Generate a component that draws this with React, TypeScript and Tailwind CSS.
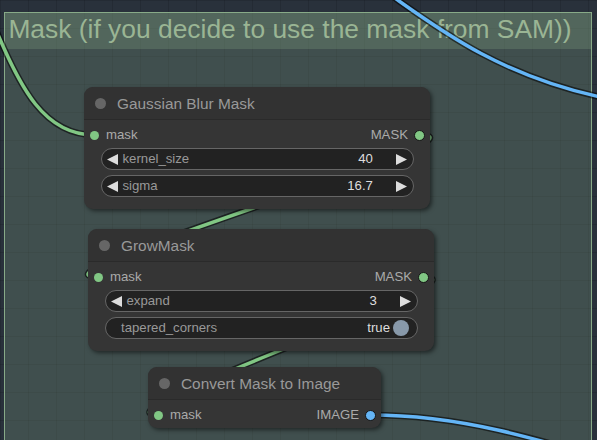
import React from "react";

function Tri({ dir }: { dir: "l" | "r" }) {
  return (
    <svg width="11" height="11" viewBox="0 0 11 11" className="shrink-0">
      {dir === "l" ? (
        <path d="M11 0 L0 5.5 L11 11 Z" fill="#dddddd" />
      ) : (
        <path d="M0 0 L11 5.5 L0 11 Z" fill="#dddddd" />
      )}
    </svg>
  );
}

function NumWidget({ label, value }: { label: string; value: string }) {
  return (
    <div className="h-[22px] rounded-full border border-[#666666] bg-[#222222] flex items-center pl-[5.6px] pr-[5.6px]">
      <Tri dir="l" />
      <span className="ml-[4.4px] text-[13.2px] text-[#999999]">{label}</span>
      <span className="ml-auto mr-[23px] text-[13.2px] text-[#dddddd]">{value}</span>
      <Tri dir="r" />
    </div>
  );
}

function ToggleWidget({ label, value }: { label: string; value: string }) {
  return (
    <div className="h-[22px] rounded-full border border-[#666666] bg-[#222222] flex items-center pl-[15.5px] pr-[7.5px]">
      <span className="text-[13.2px] text-[#999999]">{label}</span>
      <span className="ml-auto mr-[3px] text-[13.2px] text-[#dddddd]">{value}</span>
      <span className="w-[16px] h-[16px] rounded-full bg-[#8899aa] shrink-0" />
    </div>
  );
}

function SlotRow({ input, output, outColor }: { input: string; output: string; outColor: "green" | "blue" }) {
  return (
    <div className="h-[28px] pt-[2px] flex items-center pl-[6px] pr-[5px]">
      <span className="w-[9px] h-[9px] rounded-full bg-[#81c784] shrink-0" />
      <span className="ml-[7px] text-[13.2px] text-[#aaaaaa]">{input}</span>
      <span className="ml-auto mr-[6px] text-[13.2px] text-[#aaaaaa]">{output}</span>
      <span
        className={
          outColor === "green"
            ? "w-[11px] h-[11px] rounded-full bg-[#81c784] border-[1.5px] border-[#161616] shrink-0"
            : "w-[11px] h-[11px] rounded-full bg-[#64b5f6] border-[1.5px] border-[#161616] shrink-0"
        }
      />
    </div>
  );
}

function Title({ text }: { text: string }) {
  return (
    <div className="h-[33px] flex items-center pl-[11px] pt-[1px] bg-[#323232] border-b border-[#2a2a2a] rounded-t-[9px]">
      <span className="w-[11px] h-[11px] rounded-full bg-[#666666] shrink-0" />
      <span className="ml-[11px] text-[15.4px] text-[#999999]">{text}</span>
    </div>
  );
}

export default function App() {
  return (
    <div className="relative w-[597px] h-[440px] overflow-hidden bg-[#29313b] font-['Liberation_Sans',Arial,sans-serif] bg-[linear-gradient(to_right,rgba(0,0,0,0.12)_1px,transparent_1px),linear-gradient(to_bottom,rgba(0,0,0,0.12)_1px,transparent_1px)] bg-size-[28px_28px]">
      {/* Group */}
      <div className="absolute left-[4px] top-[12px] w-[588px] h-[470px] border border-[#88aa88] bg-[rgba(136,170,136,0.25)]">
        <div className="h-[36px] bg-[rgba(136,170,136,0.25)] pl-[3.4px] pt-[3px]">
          <span className="block text-[26.4px] leading-none whitespace-nowrap text-[#9ab594]">
            Mask (if you decide to use the mask from SAM))
          </span>
        </div>
      </div>

      {/* Links */}
      <svg className="absolute inset-0 pointer-events-none" width="597" height="440" viewBox="0 0 597 440" fill="none">
        <g stroke="rgba(0,0,0,0.55)" strokeWidth="6.5" strokeLinecap="round">
          <path d="M -8 20 C 20 90, 45 135, 94.5 135" />
          <path d="M 419.5 135 C 507.3 135, 10.7 277, 98.5 277" />
          <path d="M 423.5 277 C 498.2 277, 83.8 415, 158.5 415" />
          <path d="M 370.5 415 C 450 415, 520 430, 700 490" />
          <path d="M 392 -4 C 440 30, 500 75, 600 97" />
        </g>
        <g strokeWidth="3.5" strokeLinecap="round">
          <path d="M -8 20 C 20 90, 45 135, 94.5 135" stroke="#81c784" />
          <path d="M 419.5 135 C 507.3 135, 10.7 277, 98.5 277" stroke="#81c784" />
          <path d="M 423.5 277 C 498.2 277, 83.8 415, 158.5 415" stroke="#81c784" />
          <path d="M 370.5 415 C 450 415, 520 430, 700 490" stroke="#64b5f6" />
          <path d="M 392 -4 C 440 30, 500 75, 600 97" stroke="#64b5f6" />
        </g>
      </svg>

      {/* Node: Gaussian Blur Mask */}
      <div className="absolute left-[84px] top-[87px] w-[346px] rounded-[9px] bg-[#353535] shadow-[2px_2px_4px_rgba(0,0,0,0.5)]">
        <Title text="Gaussian Blur Mask" />
        <SlotRow input="mask" output="MASK" outColor="green" />
        <div className="mx-[16.5px] flex flex-col gap-[5px] pb-[12px]">
          <NumWidget label="kernel_size" value="40" />
          <NumWidget label="sigma" value="16.7" />
        </div>
      </div>

      {/* Node: GrowMask */}
      <div className="absolute left-[88px] top-[229px] w-[346px] rounded-[9px] bg-[#353535] shadow-[2px_2px_4px_rgba(0,0,0,0.5)]">
        <Title text="GrowMask" />
        <SlotRow input="mask" output="MASK" outColor="green" />
        <div className="mx-[16.5px] flex flex-col gap-[5px] pb-[12px]">
          <NumWidget label="expand" value="3" />
          <ToggleWidget label="tapered_corners" value="true" />
        </div>
      </div>

      {/* Node: Convert Mask to Image */}
      <div className="absolute left-[148px] top-[367px] w-[233px] rounded-[9px] bg-[#353535] shadow-[2px_2px_4px_rgba(0,0,0,0.5)]">
        <Title text="Convert Mask to Image" />
        <SlotRow input="mask" output="IMAGE" outColor="blue" />
      </div>
    </div>
  );
}
